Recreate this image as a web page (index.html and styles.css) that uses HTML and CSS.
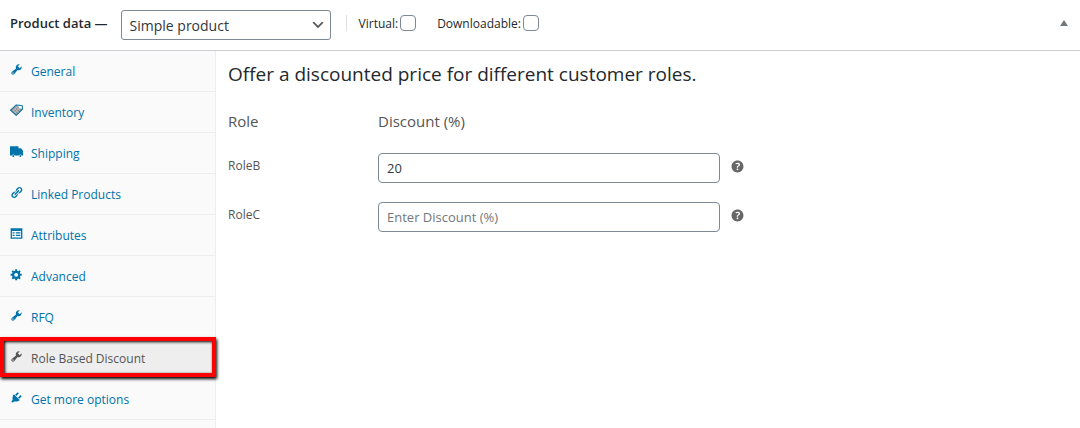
FILE: index.html
```html
<!DOCTYPE html>
<html lang="en">
<head>
<meta charset="utf-8">
<title>Product data</title>
<link rel="stylesheet" href="styles.css">
</head>
<body>
<svg class="sprite" aria-hidden="true">
  <symbol id="wrench" viewBox="0 0 20 20"><path d="M16.68 9.77c-1.34 1.34-3.3 1.67-4.95.99l-5.41 6.52c-.99.99-2.59.99-3.58 0s-.99-2.59 0-3.57l6.52-5.42c-.68-1.65-.35-3.61.99-4.95 1.28-1.28 3.12-1.62 4.72-1.06l-2.89 2.89 2.82 2.82 2.86-2.87c.53 1.58.18 3.39-1.08 4.65zM3.81 16.21c.4.39 1.04.39 1.43 0 .4-.4.4-1.04 0-1.43-.39-.4-1.03-.4-1.43 0-.39.39-.39 1.03 0 1.43z"/></symbol>
  <symbol id="help" viewBox="0 0 20 20"><path d="M17 10c0-3.87-3.14-7-7-7-3.87 0-7 3.13-7 7s3.13 7 7 7c3.86 0 7-3.13 7-7zm-6.3 1.48H9.14v-.43c0-.38.08-.7.24-.98s.46-.57.88-.89c.41-.29.68-.53.81-.71.14-.18.2-.39.2-.62 0-.25-.09-.44-.28-.58-.19-.13-.45-.19-.79-.19-.58 0-1.25.15-2 .46l-.64-1.28c.87-.49 1.8-.74 2.77-.74.81 0 1.45.2 1.92.58.48.39.71.91.71 1.55 0 .43-.09.8-.29 1.11-.19.32-.57.67-1.11 1.06-.38.28-.61.49-.71.63-.1.15-.15.34-.15.57v.46zm-1.47 2.74c-.18-.17-.27-.42-.27-.73 0-.33.08-.58.26-.75s.43-.25.77-.25c.32 0 .57.09.75.26s.27.42.27.74c0 .3-.09.55-.27.72-.18.18-.43.27-.75.27-.33 0-.58-.09-.76-.26z"/></symbol>
</svg>

<header class="header">
  <h2 class="header-title"><label for="product-type">Product data —</label></h2>
  <div class="select-wrap">
    <select class="select" id="product-type"><option>Simple product</option></select>
    <svg class="chevron" viewBox="0 0 20 20" aria-hidden="true"><path d="M5 6l5 5 5-5 2 1-7 7-7-7 2-1z"/></svg>
  </div>
  <div class="flags">
    <label class="flag">Virtual:<input class="checkbox" type="checkbox"></label>
    <label class="flag">Downloadable:<input class="checkbox" type="checkbox"></label>
  </div>
  <button class="toggle" type="button" aria-label="Toggle panel"><svg class="toggle-icon" viewBox="0 0 8 6" aria-hidden="true"><path d="M4 0l4 6H0z"/></svg></button>
</header>

<div class="panel">
  <nav class="tabs">
    <a class="tab" href="#"><svg class="icon"><use href="#wrench"/></svg>General</a>
    <a class="tab" href="#"><svg class="icon" viewBox="0 0 20 20"><path fill="#555" fill-opacity=".6" d="M0 9.500L9.500 1l9.500 7.500L9.500 18z"/><path fill="none" stroke="currentColor" stroke-width="1.600" d="M1 9.500L9.500 1.500 14 2l5 1v5L9.500 17.500z"/><path fill="none" stroke="#fafafa" stroke-width=".8" stroke-dasharray="1.500 1" d="M4 9l6 6M7 7l6 6M9 4l6 6M4 11l8-8M7 14l8-8"/><circle cx="15.500" cy="5" r="1.800" fill="#fafafa"/></svg>Inventory</a>
    <a class="tab" href="#"><svg class="icon" viewBox="0 0 20 20"><path d="M0 2h13v3h4l3 4v7h-2a2.200 2.200 0 0 0-4 0H7a2.200 2.200 0 0 0-4 0H0z"/><circle cx="5" cy="17" r="1.500"/><circle cx="16" cy="17" r="1.500"/></svg>Shipping</a>
    <a class="tab" href="#"><svg class="icon" viewBox="0 0 20 20"><path d="M17.740 2.760c1.680 1.690 1.680 4.410 0 6.100l-1.530 1.520c-1.120 1.120-2.700 1.470-4.140 1.090l2.620-2.610.76-.77.76-.76c.84-.84.84-2.200 0-3.040-.84-.85-2.200-.85-3.040 0l-.77.76-3.380 3.380c-.37-1.440-.02-3.020 1.100-4.140l1.520-1.530c1.690-1.680 4.420-1.680 6.100 0zM8.590 13.430l5.340-5.340c.42-.42.42-1.100 0-1.520-.44-.43-1.130-.39-1.530 0l-5.330 5.340c-.42.42-.42 1.100 0 1.520.44.43 1.130.39 1.520 0zm-.76 2.290l4.140-4.150c.38 1.440.03 3.020-1.090 4.140l-1.520 1.530c-1.690 1.680-4.410 1.680-6.100 0-1.680-1.680-1.680-4.420 0-6.100l1.530-1.520c1.120-1.120 2.700-1.470 4.140-1.100l-4.140 4.150c-.85.84-.85 2.200 0 3.050.84.84 2.200.84 3.040 0z"/></svg>Linked Products</a>
    <a class="tab" href="#"><svg class="icon" viewBox="0 0 20 20"><path fill-rule="evenodd" d="M1 2h18v16H1zM3 6v10h14V6zM4 8h3v2H4zM9 8h7v2H9zM4 12h3v2H4zM9 12h7v2H9z"/></svg>Attributes</a>
    <a class="tab" href="#"><svg class="icon" viewBox="0 0 20 20"><path d="M18 12h-2.180c-.17.7-.44 1.350-.81 1.930l1.540 1.540-2.100 2.100-1.540-1.540c-.58.36-1.230.63-1.910.79V19H8v-2.180c-.68-.16-1.330-.43-1.910-.79l-1.540 1.540-2.120-2.120 1.540-1.540c-.36-.58-.63-1.230-.79-1.910H1V9.030h2.170c.16-.7.44-1.350.8-1.940L2.430 5.550l2.100-2.100 1.540 1.540c.58-.37 1.240-.64 1.930-.81V2h3v2.180c.68.16 1.330.43 1.910.79l1.540-1.540 2.120 2.120-1.540 1.540c.36.59.64 1.240.8 1.940H18V12zm-8.500 1.500c1.660 0 3-1.340 3-3s-1.340-3-3-3-3 1.340-3 3 1.340 3 3 3z"/></svg>Advanced</a>
    <a class="tab" href="#"><svg class="icon"><use href="#wrench"/></svg>RFQ</a>
    <a class="tab tab-active" href="#" aria-current="page"><svg class="icon"><use href="#wrench"/></svg>Role Based Discount</a>
    <a class="tab" href="#"><svg class="icon" viewBox="0 0 20 20"><path d="M13.110 4.360L9.870 7.600 8 5.730l3.240-3.240c.35-.34 1.050-.2 1.560.32.52.51.66 1.210.31 1.550zm-8 1.770l.91-1.120 9.010 9.010-1.190.84c-.71.71-2.630 1.160-3.820 1.160H6.140L4.900 17.260c-.59.59-1.540.59-2.120 0-.59-.58-.59-1.530 0-2.120l1.240-1.240v-3.880c0-1.130.4-3.190 1.090-3.890zm7.260 3.970l3.240-3.240c.34-.35 1.040-.21 1.550.31.52.51.66 1.210.31 1.550l-3.240 3.250z"/></svg>Get more options</a>
  </nav>
  <main class="content">
    <h1 class="heading">Offer a discounted price for different customer roles.</h1>
    <div class="row row-head"><span>Role</span><span>Discount (%)</span></div>
    <div class="row">
      <label class="role" for="role-b">RoleB</label>
      <input class="input" id="role-b" type="text" value="20">
      <svg class="help"><use href="#help"/></svg>
    </div>
    <div class="row">
      <label class="role" for="role-c">RoleC</label>
      <input class="input" id="role-c" type="text" placeholder="Enter Discount (%)">
      <svg class="help"><use href="#help"/></svg>
    </div>
  </main>
</div>
</body>
</html>
```
FILE: styles.css
```css
* { box-sizing: border-box; }

body {
  margin: 0;
  min-height: 100vh;
  display: flex;
  flex-direction: column;
  background: #fff;
  color: #23282d;
  font-family: "Segoe UI", "Open Sans", "Noto Sans", sans-serif;
  font-size: 12px;
  overflow: hidden;
}

.sprite { display: none; }

.header {
  display: flex;
  align-items: center;
  height: 51px;
  padding: 0 12px 4px 10px;
  border-bottom: 1px solid #ccd0d4;
}

.header-title { margin: 0; font-size: 13px; font-weight: 600; }

.select-wrap { display: grid; align-items: center; margin: 4px 0 0 13px; }

.select {
  grid-area: 1 / 1;
  appearance: none;
  width: 210px;
  height: 30px;
  padding: 0 24px 0 8px;
  border: 1px solid #7e8993;
  border-radius: 3px;
  background: #fff;
  color: #32373c;
  font: 500 14px "Segoe UI", "Open Sans", "Noto Sans", sans-serif;
}

.chevron {
  grid-area: 1 / 1;
  justify-self: end;
  width: 16px;
  height: 16px;
  margin-right: 5px;
  fill: #555;
  pointer-events: none;
}

.flags {
  display: flex;
  align-items: center;
  gap: 21px;
  height: 16px;
  margin-left: 15px;
  padding-left: 12px;
  border-left: 1px solid #dfdfdf;
}

.flag { display: flex; align-items: center; gap: 2px; font-weight: 500; }

.checkbox {
  appearance: none;
  width: 16px;
  height: 16px;
  margin: 0;
  border: 1px solid #7e8993;
  border-radius: 4px;
  background: #fff;
}

.toggle { margin-left: auto; padding: 0; border: 0; background: none; }
.toggle-icon { display: block; width: 8px; height: 6px; fill: #72777c; }

.panel { display: flex; flex: 1; }

.tabs {
  flex: none;
  width: 216px;
  border-right: 1px solid #eee;
  background: #fafafa;
}

.tab {
  display: flex;
  align-items: center;
  gap: 8px;
  height: 41px;
  padding-left: 10px;
  border-bottom: 1px solid #eee;
  color: #0073aa;
  text-decoration: none;
}

.icon { width: 13px; height: 13px; margin-bottom: 4px; fill: currentColor; }

.tab-active {
  position: relative;
  margin-right: -1px;
  background: #eee;
  color: #555;
}

.tab-active::after {
  content: "";
  position: absolute;
  inset: -1px 0 1px 0;
  border: 4px solid #f00;
  box-shadow: 1px 2px 3px #000, inset 1px 1px 3px #000;
}

.content { flex: 1; padding: 9px 12px; color: #555; }

.heading {
  margin: 0 0 21px;
  color: #23282d;
  font-size: 19px;
  font-weight: 400;
  line-height: 28px;
}

.row {
  display: grid;
  grid-template-columns: 150px 342px 26px;
  margin-bottom: 19px;
}

.row-head { margin-bottom: 20px; font-size: 15px; font-weight: 500; line-height: 24px; }

.role { padding-top: 4px; font-weight: 500; line-height: 18px; }

.input {
  height: 30px;
  padding: 0 8px;
  border: 1px solid #7e8993;
  border-radius: 4px;
  background: #fff;
  color: #32373c;
  font: 13px "Segoe UI", "Open Sans", "Noto Sans", sans-serif;
}

.input::placeholder { color: #72777c; }

.help { width: 17px; height: 17px; margin: 5px 0 0 9px; fill: #666; }
```
